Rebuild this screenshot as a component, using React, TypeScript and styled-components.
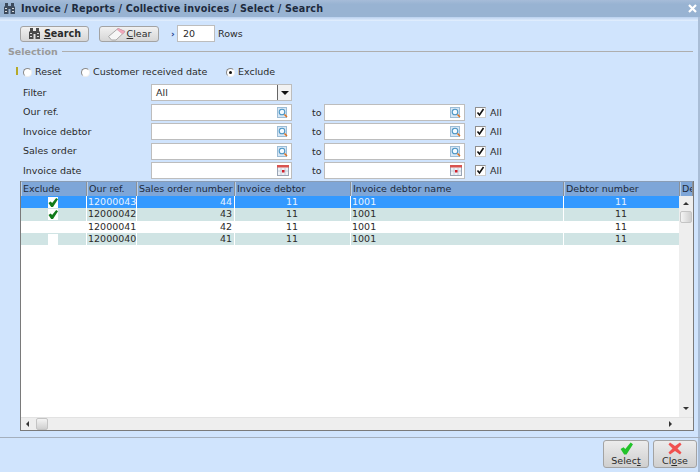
import type { ReactNode } from "react";
import styled, { createGlobalStyle } from "styled-components";

const GlobalStyle = createGlobalStyle`
    html, body { margin: 0; padding: 0; }
    body {
        width: 700px;
        height: 472px;
        overflow: hidden;
        background: #d0e4fd;
        font-family: "DejaVu Sans", Verdana, sans-serif;
        font-size: 9.5px;
        color: #2b2b2b;
    }
`

const Window = styled.div`
    width: 700px;
    height: 472px;
    display: flex;
    flex-direction: column;
    border-right: 2px solid #a9bdd6;
    box-sizing: border-box;
`

const TitleBar = styled.div`
    height: 17px;
    flex: none;
    display: flex;
    align-items: center;
    padding: 0 3px;
    gap: 5px;
    background: linear-gradient(#a6bcd8, #98b3d2 25%);
    margin-right: -2px;
    font-weight: bold;
    font-size: 9.6px;
    color: #1d2a3d;
    letter-spacing: 0.16px;
`

const TitleText = styled.span`
    flex: 1;
`

const HeaderGlow = styled.div`
    height: 4px;
    flex: none;
    background: linear-gradient(#b9d0ee, #e4f0ff);
`

const Toolbar = styled.div`
    display: flex;
    align-items: center;
    height: 17px;
    margin-top: 4px;
    padding-left: 20px;
    flex: none;
`

const ToolButton = styled.button<{ $width: number; $bold?: boolean; $gap: number }>`
    width: ${(p) => p.$width}px;
    height: 16px;
    box-sizing: border-box;
    display: flex;
    align-items: center;
    justify-content: center;
    gap: ${(p) => p.$gap}px;
    padding: 0;
    border: 1px solid #a3a3a3;
    border-radius: 3px;
    background: linear-gradient(#f1f1f1, #d6d6d6);
    font-family: inherit;
    font-size: ${(p) => (p.$bold ? "9.6px" : "9.5px")};
    font-weight: ${(p) => (p.$bold ? "bold" : "normal")};
    color: #2b2b2b;
    margin-right: 10px;
    & u { text-decoration: underline; }
`

const RowsArrow = styled.span`
    width: 6px;
    margin-left: 2px;
    font-size: 9px;
    font-weight: bold;
    color: #1c3f8f;
`

const RowsInput = styled.div`
    width: 38px;
    height: 17px;
    box-sizing: border-box;
    background: #fff;
    border: 1px solid #bdbdbd;
    padding-left: 5px;
    line-height: 15px;
`

const RowsLabel = styled.span`
    margin-left: 3px;
`

const Legend = styled.div`
    display: flex;
    align-items: center;
    gap: 4px;
    height: 12px;
    margin: 3px 5px 0 8px;
    flex: none;
    font-weight: bold;
    color: #9a9a9a;
    &::after {
        content: "";
        flex: 1;
        height: 1px;
        background: #aeaeae;
    }
`

const RadioRow = styled.div`
    position: relative;
    display: flex;
    align-items: center;
    height: 14px;
    margin-top: 7px;
    padding-left: 23px;
    flex: none;
`

const Mandatory = styled.span`
    position: absolute;
    left: 16px;
    top: 3px;
    width: 2px;
    height: 8px;
    background: #b5a92a;
`

const RadioItem = styled.label<{ $width: number }>`
    display: flex;
    align-items: center;
    gap: 3px;
    width: ${(p) => p.$width}px;
`

const RadioDot = styled.span<{ $checked?: boolean }>`
    width: 9px;
    height: 9px;
    border-radius: 50%;
    box-sizing: border-box;
    border: 1px solid #8a8a8a;
    border-bottom-color: #eee;
    border-right-color: #eee;
    background: #fff;
    display: flex;
    align-items: center;
    justify-content: center;
    margin-top: 2px;
    &::after {
        content: "";
        display: ${(p) => (p.$checked ? "block" : "none")};
        width: 3px;
        height: 3px;
        border-radius: 50%;
        background: #111;
    }
`

const Form = styled.div`
    display: grid;
    grid-template-columns: 128px 141px 32px 141px 10px auto;
    grid-auto-rows: 17px;
    row-gap: 2.5px;
    justify-content: start;
    align-items: center;
    margin-top: 6px;
    padding-left: 23px;
    flex: none;
`

const FieldLabel = styled.span`
    grid-column: 1;
    margin-top: -1px;
`

const FieldBox = styled.div`
    height: 17px;
    box-sizing: border-box;
    background: #fff;
    border: 1px solid #bdbdbd;
    display: flex;
    align-items: center;
    justify-content: flex-end;
    padding-right: 2px;
`

const ToField = styled(FieldBox)`
    grid-column: 4;
`

const SelectBox = styled(FieldBox)`
    justify-content: space-between;
    padding: 0;
    padding-left: 4px;
`

const SelectArrow = styled.span`
    width: 14px;
    height: 15px;
    box-sizing: border-box;
    border-left: 1px solid #666;
    background: #f2f2f2;
    display: flex;
    align-items: center;
    justify-content: center;
    &::after {
        content: "";
        border-left: 4px solid transparent;
        border-right: 4px solid transparent;
        border-top: 4px solid #111;
    }
`

const ToLabel = styled.span`
    padding-left: 20px;
`

const AllCell = styled.label`
    grid-column: 6;
    display: flex;
    align-items: center;
    gap: 4px;
`

const CheckBox = styled.span`
    width: 11px;
    height: 11px;
    box-sizing: border-box;
    background: #fff;
    border: 1px solid #8f8f8f;
    border-bottom-color: #ccc;
    border-right-color: #ccc;
    display: flex;
    align-items: center;
    justify-content: center;
`

const columns = "66px 50px 98px 116px 213px 116px 1fr"

const Grid = styled.div`
    position: relative;
    height: 250px;
    margin: 2px 4px 0 20px;
    flex: none;
    background: #fff;
    border: 1px solid #7a7a7a;
    border-top: none;
    box-sizing: border-box;
    overflow: hidden;
`

const HeaderRow = styled.div`
    display: grid;
    grid-template-columns: ${columns};
    height: 15px;
    background: #7ea6d8;
    border-top: 1px solid #8a9db5;
    box-sizing: border-box;
`

const HeaderCell = styled.div`
    padding-left: 1px;
    line-height: 13px;
    white-space: nowrap;
    overflow: hidden;
    color: #1f2a3a;
    border-right: 1px solid #8b9198;
    border-left: 1px solid #b9cfe9;
`

const DataRow = styled.div<{ $shade: "selected" | "even" | "odd" }>`
    display: grid;
    grid-template-columns: ${columns};
    height: 12.3px;
    line-height: 12px;
    background: ${(p) => (p.$shade === "selected" ? "#3399ff" : p.$shade === "even" ? "#d0e4e4" : "#fff")};
    color: ${(p) => (p.$shade === "selected" ? "#e6f3ff" : "#2b2b2b")};
`

const DataCell = styled.div<{ $align?: "right" | "center" }>`
    display: flex;
    align-items: center;
    justify-content: ${(p) => (p.$align === "right" ? "flex-end" : p.$align === "center" ? "center" : "flex-start")};
    padding: 0 2px 0 1px;
    border-right: 1px solid #fff;
    box-sizing: border-box;
    white-space: nowrap;
`

const ExcludeBox = styled.span`
    width: 10px;
    height: 11px;
    background: #fff;
    display: flex;
    align-items: center;
    justify-content: center;
`

const VScroll = styled.div`
    position: absolute;
    right: 0;
    top: 15px;
    bottom: 13px;
    width: 14px;
    background: #eeeeee;
`

const HScroll = styled.div`
    position: absolute;
    left: 0;
    right: 0;
    bottom: 0;
    height: 13px;
    background: #eeeeee;
    border-top: 1px solid #e2e2e2;
    box-sizing: border-box;
`

const ScrollArrow = styled.span<{ $dir: "up" | "down" | "left" | "right" }>`
    position: absolute;
    width: 0;
    height: 0;
    ${(p) =>
        p.$dir === "up"
            ? "top: 6px; right: 4px; border: 3px solid transparent; border-top: none; border-bottom: 3px solid #333;"
            : p.$dir === "down"
            ? "bottom: 7px; right: 4px; border: 3px solid transparent; border-bottom: none; border-top: 3px solid #333;"
            : p.$dir === "left"
            ? "top: 3px; left: 5px; border: 3px solid transparent; border-left: none; border-right: 3px solid #333;"
            : "top: 3px; right: 21px; border: 3px solid transparent; border-right: none; border-left: 3px solid #333;"}
`

const VThumb = styled.span`
    position: absolute;
    top: 15px;
    left: 1px;
    width: 12px;
    height: 12px;
    box-sizing: border-box;
    border: 1px solid #c4c4c4;
    border-radius: 2px;
    background: linear-gradient(90deg, #f4f4f4, #cfcfcf);
`

const HThumb = styled.span`
    position: absolute;
    top: 0;
    left: 15px;
    width: 12px;
    height: 12px;
    box-sizing: border-box;
    border: 1px solid #c4c4c4;
    border-radius: 2px;
    background: linear-gradient(#f4f4f4, #cfcfcf);
`

const Footer = styled.div`
    flex: 1;
    margin-top: 6px;
    margin-right: -2px;
    border-top: 1px solid #a4afbd;
    display: flex;
    justify-content: flex-end;
    gap: 4px;
    padding: 2px 3px 0 0;
`

const BigButton = styled.button<{ $width: number }>`
    width: ${(p) => p.$width}px;
    height: 28px;
    box-sizing: border-box;
    border: 1px solid #a3a3a3;
    border-radius: 3px;
    background: linear-gradient(#ececec, #cfcfcf);
    padding: 1px 0 0;
    display: flex;
    flex-direction: column;
    align-items: center;
    font-family: inherit;
    font-size: 9.5px;
    line-height: 11px;
    color: #2b2b2b;
`

function Binoculars({ color = "#4a4a4a" }: { color?: string }) {
    return (
        <svg width="13" height="11" viewBox="0 0 13 11">
            <path d="M2 0h3v3h3V0h3v3l1 1v7H7.500V6h-2v5H1V4l1-1z" fill={color} />
            <path d="M2 5h2v1H2zM9 5h2v1H9zM2 8h2v1H2zM9 8h2v1H9z" fill="#d8d8d8" />
        </svg>
    )
}

function Eraser() {
    return (
        <svg width="20" height="14" viewBox="0 0 20 14">
            <path d="M1.500 9.500L11 1.500l7 3-9 8.500H4.500z" fill="#f6f6f6" stroke="#a9a9a9" />
            <path d="M10 2.500l1.500-1 6.500 3-2.500 2.500z" fill="#f2a9bb" stroke="#d98aa0" strokeWidth="0.5" />
        </svg>
    )
}

function LookupIcon() {
    return (
        <svg width="12" height="13" viewBox="0 0 12 13">
            <rect x="0.500" y="1.500" width="9" height="10" fill="#d6e6f5" stroke="#9dbdd6" />
            <circle cx="5" cy="6" r="2.800" fill="#f2f9ff" stroke="#4d96c4" strokeWidth="1.100" />
            <path d="M7.500 8.500l2.500 2.500" stroke="#e0701c" strokeWidth="1.500" />
        </svg>
    )
}

function CalendarIcon() {
    return (
        <svg width="12" height="11" viewBox="0 0 12 11">
            <rect x="0.500" y="0.500" width="11" height="10" fill="#eef1f6" stroke="#9aa5b5" />
            <rect x="0" y="0" width="12" height="2.500" fill="#d9534f" />
            <path d="M4 3v7M8 3v7M1 6h10" stroke="#bcc6d4" strokeWidth="0.800" />
            <rect x="5" y="5" width="2.500" height="2.500" fill="#d01f2a" />
        </svg>
    )
}

function SmallCheck() {
    return (
        <svg width="9" height="9" viewBox="0 0 9 9">
            <path d="M1.500 4.500l2 2.500 4-6" fill="none" stroke="#111" strokeWidth="1.600" />
        </svg>
    )
}

function GreenCheck({ size = 11, color = "#117a1a" }: { size?: number; color?: string }) {
    return (
        <svg width={size} height={size} viewBox="0 0 11 11">
            <path d="M0.500 6L3 4.500l1.500 1.500L9 0.500l2 1.500L5.500 10.500H3.500z" fill={color} />
        </svg>
    )
}

function BigCross() {
    return (
        <svg width="14" height="13" viewBox="0 0 14 13">
            <path d="M2 0.500L7 4l5-3.500 1.500 2L9.500 6.500l4 4L12 12.500 7 9l-5 3.500-1.500-2 4-4-4-4z" fill="#f0504f" />
        </svg>
    )
}

function CloseIcon() {
    return (
        <svg width="9" height="9" viewBox="0 0 9 9">
            <path d="M1 1l7 7M8 1l-7 7" stroke="#fff" strokeWidth="2.200" />
        </svg>
    )
}

function FieldGroup({ label, icon }: { label: string; icon: ReactNode }) {
    return (
        <>
            <FieldLabel>{label}</FieldLabel>
            <FieldBox>{icon}</FieldBox>
            <ToLabel>to</ToLabel>
            <ToField>{icon}</ToField>
            <AllCell><CheckBox><SmallCheck /></CheckBox>All</AllCell>
        </>
    )
}

const fieldRows = [
    { label: "Our ref.", icon: <LookupIcon /> },
    { label: "Invoice debtor", icon: <LookupIcon /> },
    { label: "Sales order", icon: <LookupIcon /> },
    { label: "Invoice date", icon: <CalendarIcon /> },
]

const gridHeaders = ["Exclude", "Our ref.", "Sales order number", "Invoice debtor", "Invoice debtor name", "Debtor number", "De"]

const gridRows = [
    { check: true, ref: "12000043", order: "44" },
    { check: true, ref: "12000042", order: "43" },
    { check: false, ref: "12000041", order: "42" },
    { check: false, ref: "12000040", order: "41" },
]

export default function App() {
    return (
        <Window>
            <GlobalStyle />
            <TitleBar>
                <Binoculars color="#3d4a5c" />
                <TitleText>Invoice / Reports / Collective invoices / Select / Search</TitleText>
                <CloseIcon />
            </TitleBar>
            <HeaderGlow />
            <Toolbar>
                <ToolButton $width={69} $gap={3} $bold>
                    <Binoculars />
                    <span><u>S</u>earch</span>
                </ToolButton>
                <ToolButton $width={60} $gap={0}>
                    <Eraser />
                    <span><u>C</u>lear</span>
                </ToolButton>
                <RowsArrow>›</RowsArrow>
                <RowsInput>20</RowsInput>
                <RowsLabel>Rows</RowsLabel>
            </Toolbar>
            <Legend>Selection</Legend>
            <RadioRow>
                <Mandatory />
                <RadioItem $width={58}><RadioDot />Reset</RadioItem>
                <RadioItem $width={145}><RadioDot />Customer received date</RadioItem>
                <RadioItem $width={60}><RadioDot $checked />Exclude</RadioItem>
            </RadioRow>
            <Form>
                <FieldLabel>Filter</FieldLabel>
                <SelectBox>All<SelectArrow /></SelectBox>
                {fieldRows.map((row) => (
                    <FieldGroup key={row.label} label={row.label} icon={row.icon} />
                ))}
            </Form>
            <Grid>
                <HeaderRow>
                    {gridHeaders.map((h) => <HeaderCell key={h}>{h}</HeaderCell>)}
                </HeaderRow>
                {gridRows.map((row, i) => (
                    <DataRow key={row.ref} $shade={i === 0 ? "selected" : i % 2 === 1 ? "even" : "odd"}>
                        <DataCell $align="center">
                            <ExcludeBox>{row.check && <GreenCheck />}</ExcludeBox>
                        </DataCell>
                        <DataCell>{row.ref}</DataCell>
                        <DataCell $align="right">{row.order}</DataCell>
                        <DataCell $align="center">11</DataCell>
                        <DataCell>1001</DataCell>
                        <DataCell $align="center">11</DataCell>
                        <DataCell />
                    </DataRow>
                ))}
                <VScroll>
                    <ScrollArrow $dir="up" />
                    <VThumb />
                    <ScrollArrow $dir="down" />
                </VScroll>
                <HScroll>
                    <ScrollArrow $dir="left" />
                    <HThumb />
                    <ScrollArrow $dir="right" />
                </HScroll>
            </Grid>
            <Footer>
                <BigButton $width={46}>
                    <GreenCheck size={13} color="#22c32a" />
                    <span>Selec<u>t</u></span>
                </BigButton>
                <BigButton $width={44}>
                    <BigCross />
                    <span>Cl<u>o</u>se</span>
                </BigButton>
            </Footer>
        </Window>
    )
}
